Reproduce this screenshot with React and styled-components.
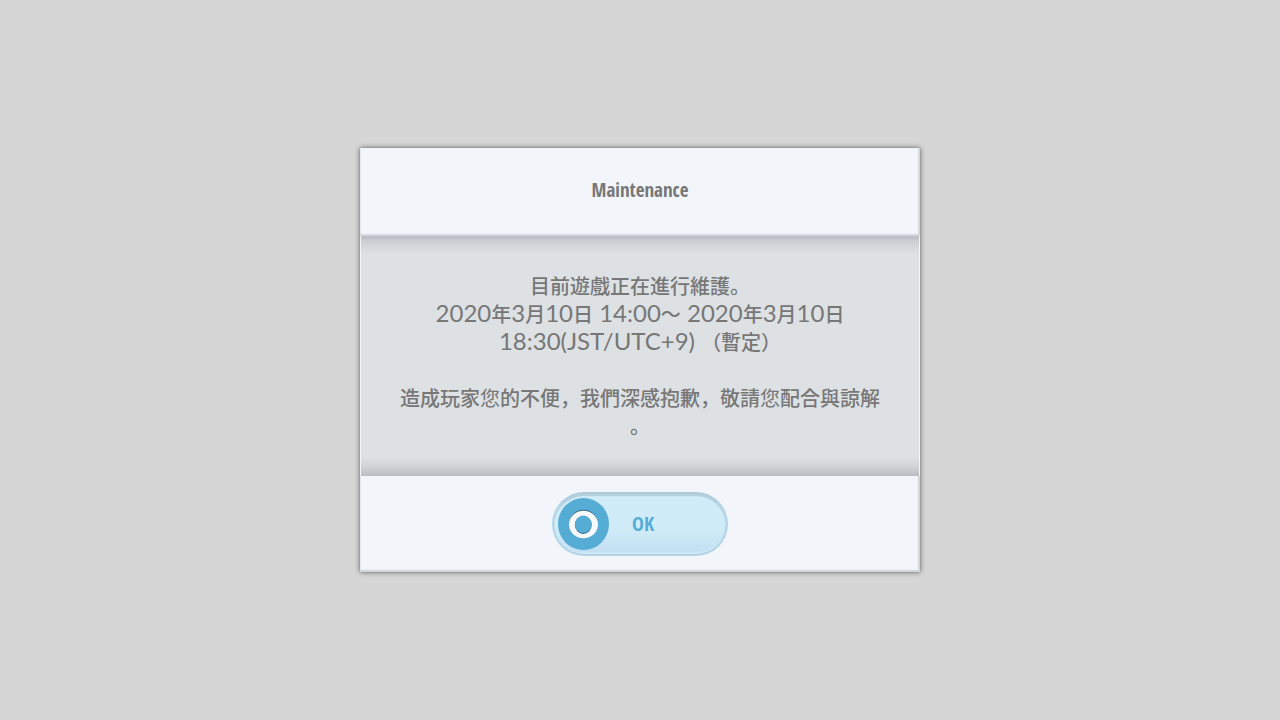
import React from 'react';
import styled, { createGlobalStyle } from 'styled-components';

const text_grey = '#777777';
const panel_white = '#f2f6fb';
const brand_blue = '#55acd4';
const narrow_fonts = '"Open Sans Condensed", "Roboto Condensed", Roboto, sans-serif';

const GlobalStyle = createGlobalStyle`
    body {
        margin: 0;
        background-color: #d6d6d6;
    }
`;

const Page = styled.main`
    min-height: 100vh;
    display: flex;
    align-items: center;
    justify-content: center;
`;

const Dialog = styled.section`
    width: 100%;
    max-width: 560px;
    display: flex;
    flex-flow: column nowrap;
    background-color: ${panel_white};
    color: ${text_grey};
    box-shadow: 0 0 5px rgba(0, 0, 0, 0.6);
`;

const DialogHead = styled.header`
    display: flex;
    align-items: center;
    justify-content: center;
    min-height: 88px;
    box-sizing: border-box;
    padding: 0 0 4px;
    box-shadow: inset -2px -2px 1px #d3d8df, inset 1px 0 1px #e4e6ec;
`;

const Title = styled.h1`
    margin: 0;
    font: bold 19px/24px ${narrow_fonts};
`;

const Message = styled.div`
    margin: 0 1px;
    padding: 36px 38px;
    text-align: center;
    font: 500 20px/28px "Noto Sans CJK JP", sans-serif;
    text-spacing-trim: space-all;
    background: linear-gradient(
        #b9bcc0 0,
        #cdd1d4 6px,
        #dde1e4 18px,
        #dde1e4 calc(100% - 18px),
        #cdd1d4 calc(100% - 8px),
        #b9bbbf 100%
    );
`;

const Line = styled.p`
    margin: 0;
    min-height: 28px;
`;

const Latin = styled.span`
    font-family: Lato, sans-serif;
    font-size: 24px;
    font-weight: 400;
    line-height: 20px;
`;

const Light = styled.span`
    font-weight: 400;
`;

const DialogFoot = styled.footer`
    display: flex;
    justify-content: center;
    padding: 16px;
    box-shadow: inset -2px -2px 1px #d0d4dc, inset 1px 0 1px #e4e6ec;
`;

const OkButton = styled.button`
    width: 176px;
    height: 64px;
    display: flex;
    align-items: center;
    gap: 22px;
    padding: 0 4px;
    border: 2px solid #b5d5e5;
    border-top-color: #b0ccda;
    border-radius: 32px;
    background: linear-gradient(#d0ecf8 0, #d0ecf8 60%, #c2dff3 96%);
    box-shadow: inset 0 2px 1px #b2cedc, inset 0 -2px 1px #cce8f6, inset -1px 0 1px #c2e0ee;
    color: ${brand_blue};
    font: bold 20px/24px ${narrow_fonts};
    cursor: pointer;
`;

const KnobIcon = () => (
    <svg width="52" height="52" viewBox="0 0 52 52" aria-hidden="true">
        <ellipse cx="25.5" cy="26" rx="25.5" ry="26" fill={brand_blue} />
        <ellipse cx="25.5" cy="25.5" rx="14" ry="13.7" fill="#35647c" />
        <ellipse cx="25.5" cy="26.5" rx="14.5" ry="13.8" fill="#f7f9fb" />
        <ellipse cx="25.3" cy="27" rx="8.4" ry="9" fill="#35647c" />
        <ellipse cx="25.3" cy="26.3" rx="8.4" ry="8.7" fill={brand_blue} />
    </svg>
);

const App = () => (
    <Page>
        <GlobalStyle />
        <Dialog role="dialog" aria-labelledby="dialog-title">
            <DialogHead>
                <Title id="dialog-title">Maintenance</Title>
            </DialogHead>
            <Message lang="ja">
                <Line>目前遊戲正在進行維護。</Line>
                <Line>
                    <Latin>2020</Latin>年<Latin>3</Latin>月<Latin>10</Latin>日
                    <Latin> 14:00</Latin>～<Latin> 2020</Latin>年<Latin>3</Latin>月<Latin>10</Latin>日
                </Line>
                <Line>
                    <Latin>18:30(JST/UTC+9) </Latin>（暫定）
                </Line>
                <Line />
                <Line>
                    造成玩家<Light>您</Light>的不便，我們深感抱歉，敬請<Light>您</Light>配合與諒解
                </Line>
                <Line>。</Line>
            </Message>
            <DialogFoot>
                <OkButton type="button">
                    <KnobIcon />
                    OK
                </OkButton>
            </DialogFoot>
        </Dialog>
    </Page>
);

export default App;
